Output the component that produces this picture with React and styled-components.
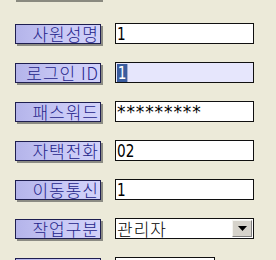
import React from "react";
import styled, { createGlobalStyle } from "styled-components";

const Global = createGlobalStyle`
  html, body { margin: 0; padding: 0; background: #ecead9; overflow: hidden; }
  body { font-family: "Noto Sans CJK KR", "DejaVu Sans", sans-serif; }
`;

const Page = styled.div`
  width: 276px;
  height: 260px;
  overflow: hidden;
  background: #ecead9;
`;

const TopShadow = styled.div`
  margin-left: 16px;
  width: 87px;
  height: 2px;
  background: #8a8a80;
`;

const Form = styled.div`
  display: flex;
  flex-direction: column;
  gap: 18px;
  padding: 21px 0 0 15px;
`;

const Row = styled.div`
  display: flex;
  align-items: center;
  gap: 14px;
  height: 21px;
`;

const Label = styled.div`
  box-sizing: border-box;
  width: 86px;
  height: 20px;
  border: 1px solid #1e1e50;
  background: linear-gradient(90deg, #b4b4ea 0%, #cacaf6 60%, #d2d2fa 100%);
  box-shadow: 2px 2px 0 #8c8c84;
  color: #24248a;
  font-size: 17px;
  font-weight: 300;
  line-height: 18px;
  letter-spacing: 1px;
  text-align: right;
  padding-right: 1px;
  white-space: nowrap;
`;

const Field = styled.div`
  box-sizing: border-box;
  width: ${(p) => p.$w || 139}px;
  height: 21px;
  border: 1px solid #101010;
  background: ${(p) => (p.$focus ? "#e6e6fc" : "#ffffff")};
  display: flex;
  align-items: center;
  padding-left: 1px;
  font-family: "DejaVu Sans", sans-serif;
  font-size: 17px;
  color: #000;
`;

const Value = styled.span`
  line-height: 18px;
  letter-spacing: ${(p) => p.$ls || 0}px;
  transform: ${(p) => (p.$narrow ? "scaleX(0.8)" : "none")};
  transform-origin: left center;
`;

const Selected = styled.span`
  background: #3a5c9e;
  color: #fff;
  line-height: 18px;
  padding: 0 1px;
  transform: scaleX(0.8);
  transform-origin: left center;
`;

const KValue = styled.span`
  font-family: "Noto Sans CJK KR", sans-serif;
  font-size: 17px;
  font-weight: 300;
  letter-spacing: 1px;
  line-height: 18px;
  flex: 1;
`;

const DropBtn = styled.div`
  box-sizing: border-box;
  width: 20px;
  height: 17px;
  margin-right: 1px;
  background: #d6d3cb;
  border-top: 1px solid #f4f4f0;
  border-left: 1px solid #f4f4f0;
  border-right: 1px solid #808080;
  border-bottom: 1px solid #808080;
  display: flex;
  align-items: center;
  justify-content: center;
`;

const rows = [
  { label: "사원성명", value: "1" },
  { label: "로그인 ID", value: "1", focus: true },
  { label: "패스워드", value: "*********", pw: true },
  { label: "자택전화", value: "02" },
  { label: "이동통신", value: "1" },
  { label: "작업구분", value: "관리자", select: true },
  { label: "입사일자", value: "", w: 100 },
];

export default function App() {
  return (
    <Page>
      <Global />
      <TopShadow />
      <Form>
        {rows.map((r) => (
          <Row key={r.label}>
            <Label>{r.label}</Label>
            <Field $focus={r.focus} $w={r.w}>
              {r.select ? (
                <>
                  <KValue>{r.value}</KValue>
                  <DropBtn>
                    <svg width="9" height="5" viewBox="0 0 9 5">
                      <path d="M0 0H9L4.5 5Z" fill="#000" />
                    </svg>
                  </DropBtn>
                </>
              ) : r.focus ? (
                <Selected>{r.value}</Selected>
              ) : r.pw ? (
                <Value $ls={0.9}>{r.value}</Value>
              ) : (
                <Value $narrow>{r.value}</Value>
              )}
            </Field>
          </Row>
        ))}
      </Form>
    </Page>
  );
}
